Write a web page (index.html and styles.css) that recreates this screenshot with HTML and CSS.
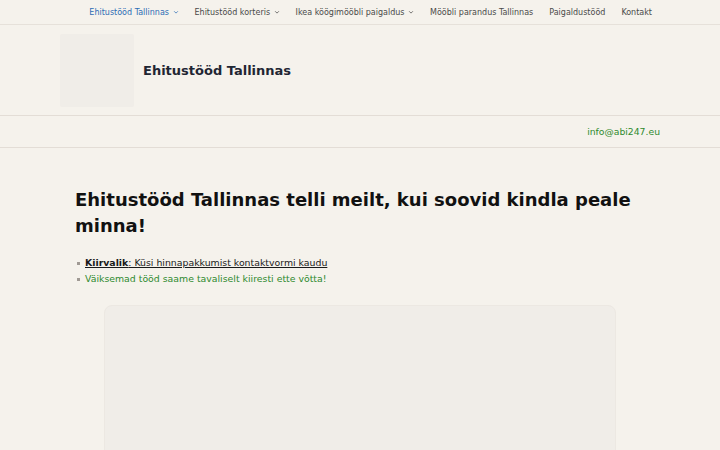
FILE: index.html
```html
<!DOCTYPE html>
<html lang="et">
<head>
<meta charset="utf-8">
<title>Ehitustööd Tallinnas</title>
<link rel="stylesheet" href="styles.css">
</head>
<body>
<nav class="topnav">
  <ul class="menu">
    <li class="item active">Ehitustööd Tallinnas <span class="chev"><svg viewBox="0 0 8 8" width="6" height="6"><path d="M1.5 3 L4 5.5 L6.5 3" fill="none" stroke="currentColor" stroke-width="1"/></svg></span></li>
    <li class="item">Ehitustööd korteris <span class="chev"><svg viewBox="0 0 8 8" width="6" height="6"><path d="M1.5 3 L4 5.5 L6.5 3" fill="none" stroke="currentColor" stroke-width="1"/></svg></span></li>
    <li class="item">Ikea köögimööbli paigaldus <span class="chev"><svg viewBox="0 0 8 8" width="6" height="6"><path d="M1.5 3 L4 5.5 L6.5 3" fill="none" stroke="currentColor" stroke-width="1"/></svg></span></li>
    <li class="item">Mööbli parandus Tallinnas</li>
    <li class="item">Paigaldustööd</li>
    <li class="item">Kontakt</li>
  </ul>
</nav>
<header class="site-header">
  <div class="brand">
    <div class="logo"></div>
    <div class="site-title">Ehitustööd Tallinnas</div>
  </div>
</header>
<div class="contact-bar">
  <a class="email" href="#">info@abi247.eu</a>
</div>
<main class="content">
  <h1 class="headline">Ehitustööd Tallinnas telli meilt, kui soovid kindla peale minna!</h1>
  <ul class="bullets">
    <li><a class="quick" href="#"><strong>Kiirvalik</strong>: Küsi hinnapakkumist kontaktvormi kaudu</a></li>
    <li class="green">Väiksemad tööd saame tavaliselt kiiresti ette võtta!</li>
  </ul>
  <div class="media"></div>
</main>
</body>
</html>
```
FILE: styles.css
```css
html, body {
  margin: 0;
  padding: 0;
  background: #f5f2ec;
  font-family: "DejaVu Sans", sans-serif;
  color: #222;
  height: 450px;
  overflow: hidden;
}
.topnav {
  height: 25px;
  border-bottom: 1px solid #e6e1da;
  box-sizing: border-box;
  display: flex;
  justify-content: flex-end;
  padding: 0 60px;
}
.menu {
  list-style: none;
  margin: 0;
  padding: 0;
  display: flex;
  align-items: center;
}
.item {
  font-size: 8px;
  color: #4a4a4a;
  padding: 0 8px;
  white-space: nowrap;
}
.item.active { color: #2d6db5; }
.chev { display: inline-block; margin-left: 1px; vertical-align: middle; }
.chev svg { display: block; }
.site-header {
  height: 91px;
  border-bottom: 1px solid #e3ddd6;
  box-sizing: border-box;
  padding: 0 60px;
  display: flex;
  align-items: center;
}
.brand { display: flex; align-items: center; gap: 9px; }
.logo {
  width: 74px;
  height: 73px;
  background: #f0ede8;
  border-radius: 2px;
}
.site-title {
  font-size: 13px;
  font-weight: bold;
  color: #1f2633;
}
.contact-bar {
  height: 32px;
  border-bottom: 1px solid #e3ddd6;
  box-sizing: border-box;
  padding: 0 60px;
  display: flex;
  justify-content: flex-end;
  align-items: center;
}
.email {
  font-size: 9.25px;
  color: #2e8a2e;
  text-decoration: none;
}
.content { padding: 39px 75px 0; }
.headline {
  margin: 0;
  font-size: 18px;
  line-height: 26px;
  font-weight: bold;
  color: #111;
}
.bullets {
  margin: 16px 0 0;
  padding: 0 0 0 10px;
  font-size: 9.35px;
  line-height: 16px;
  list-style: none;
}
.bullets li { position: relative; }
.bullets li::before {
  content: "";
  position: absolute;
  left: -8px;
  top: 7px;
  width: 3px;
  height: 3px;
  background: #a09a94;
}
.quick { color: #1a1a1a; text-decoration: underline; }
.green { color: #2e8a2e; }
.media {
  margin: 18px 29px 0;
  height: 200px;
  background: #f0ede8;
  border: 1px solid #ece8e2;
  border-radius: 8px;
}
```
